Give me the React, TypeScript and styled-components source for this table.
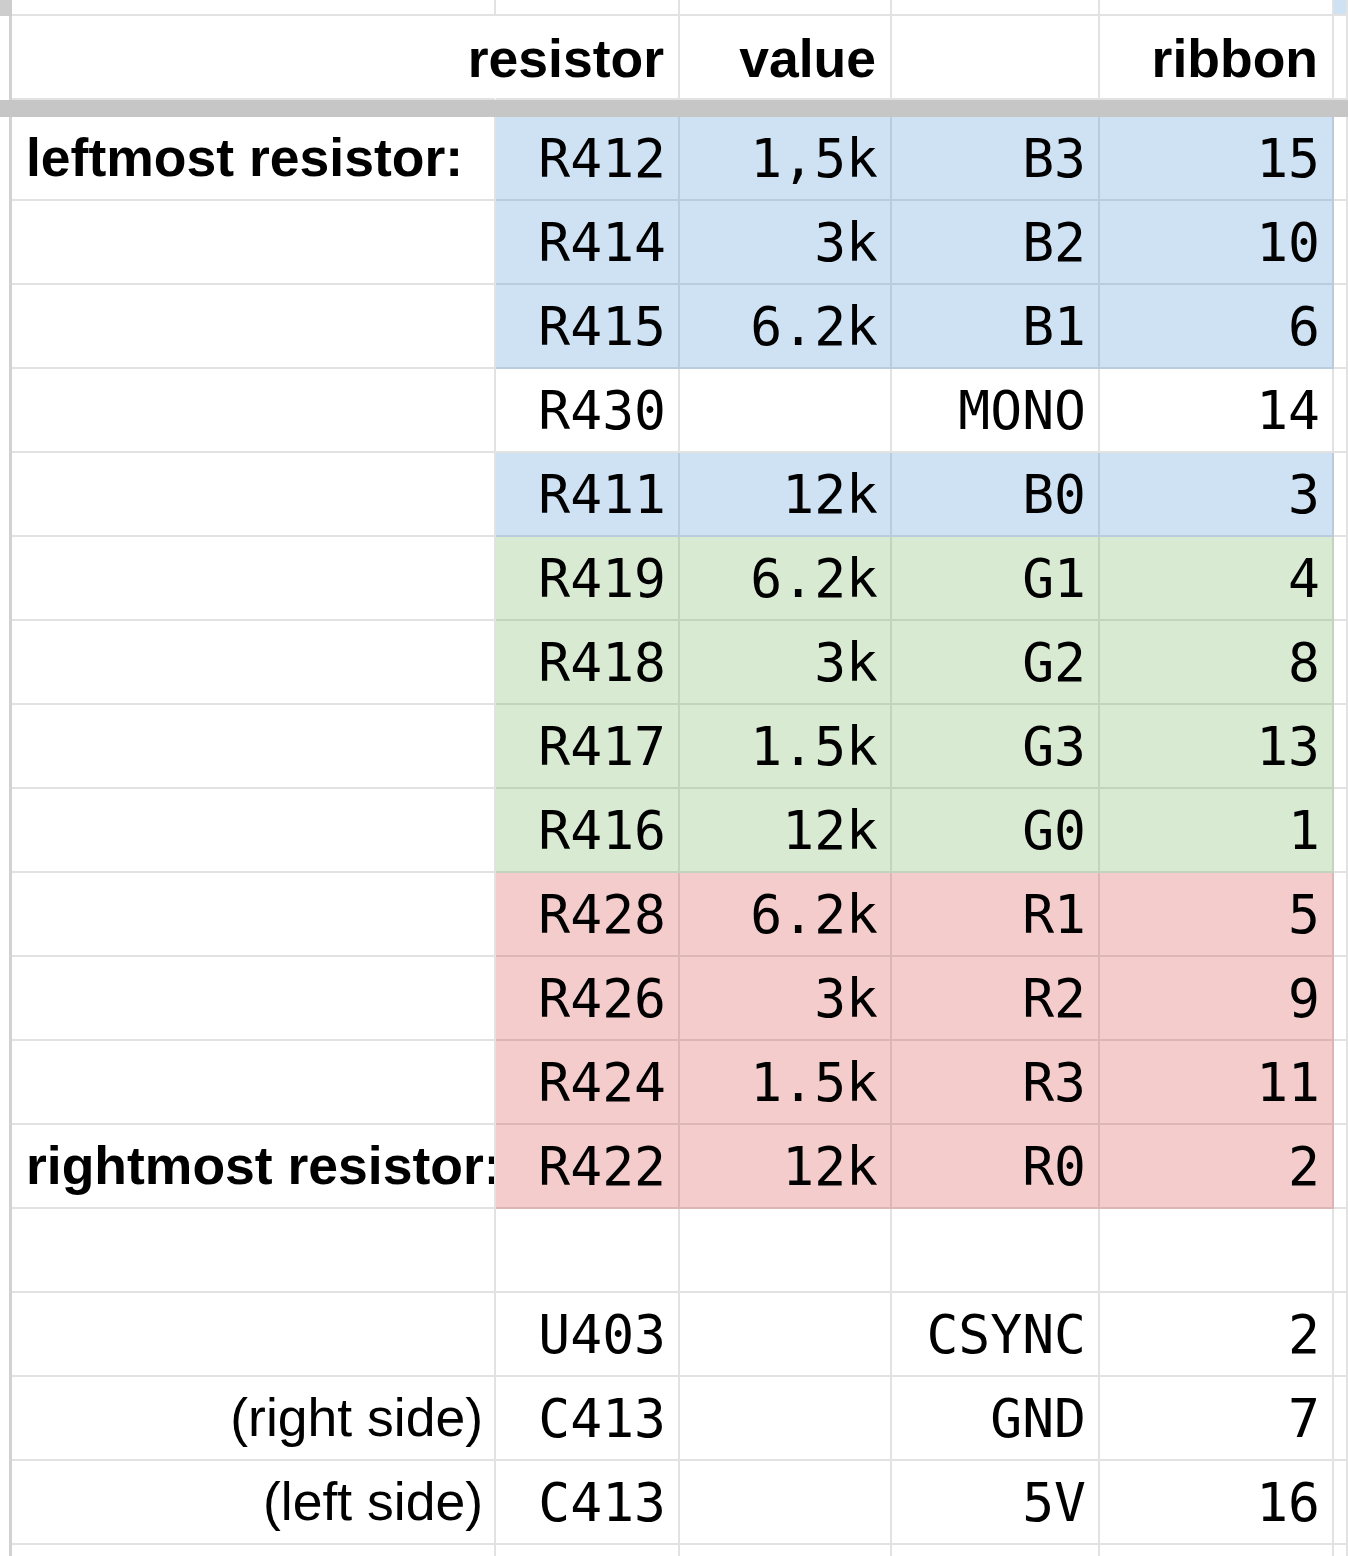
import React from "react";
import styled, { createGlobalStyle, css } from "styled-components";

type Fill = "none" | "blue" | "green" | "red";

const fills: Record<Fill, { bg: string; line: string }> = {
  none: { bg: "#ffffff", line: "#e2e2e2" },
  blue: { bg: "#cfe2f3", line: "#b9cbdd" },
  green: { bg: "#d9ead3", line: "#c2d4bd" },
  red: { bg: "#f4cccc", line: "#dcb5b5" },
};

const GlobalStyle = createGlobalStyle`
  html, body {
    margin: 0;
    padding: 0;
    background: #ffffff;
    overflow: hidden;
  }
  body {
    font-family: "Liberation Sans", Arial, sans-serif;
    color: #000;
  }
`;

const Sheet = styled.div`
  display: grid;
  grid-template-columns: 12px 484px 184px 212px 208px 234px 1fr;
  grid-template-rows: 16px 84px 17px repeat(17, 84px) 11px;
  width: 1348px;
  height: 1556px;
  overflow: hidden;
`;

const Gutter = styled.div<{ $top?: boolean }>`
  box-sizing: border-box;
  background: ${(p) => (p.$top ? "#cdcdcd" : "#ffffff")};
  border-right: 3px solid ${(p) => (p.$top ? "#cdcdcd" : "#d2d2d2")};
`;

const FrozenBar = styled.div`
  grid-column: 1 / -1;
  background: #c6c6c6;
`;

const Cell = styled.div<{
  $fill?: Fill;
  $align?: "left" | "right";
  $mono?: boolean;
  $bold?: boolean;
  $noRight?: boolean;
  $spill?: boolean;
  $head?: boolean;
}>`
  box-sizing: border-box;
  display: flex;
  align-items: center;
  justify-content: ${(p) => (p.$align === "left" ? "flex-start" : "flex-end")};
  padding: ${(p) =>
    p.$align === "left"
      ? "0 0 0 14px"
      : p.$mono
      ? "0 12px 0 0"
      : p.$head
      ? "4px 14px 0 0"
      : "0 11px 0 0"};
  background: ${(p) => fills[p.$fill ?? "none"].bg};
  border-right: 2px solid
    ${(p) => (p.$noRight ? fills[p.$fill ?? "none"].bg : fills[p.$fill ?? "none"].line)};
  border-bottom: 2px solid ${(p) => fills[p.$fill ?? "none"].line};
  white-space: nowrap;
  overflow: ${(p) => (p.$spill ? "visible" : "hidden")};
  line-height: 1;
  ${(p) =>
    p.$mono
      ? css`
          font-family: "DejaVu Sans Mono", "Liberation Mono", monospace;
          font-size: 53px;
          font-weight: 400;
        `
      : css`
          font-family: "Liberation Sans", Arial, sans-serif;
          font-size: 53.5px;
          font-weight: ${p.$bold ? 700 : 400};
        `}
`;

const TopCell = styled.div<{ $fill?: Fill }>`
  box-sizing: border-box;
  background: ${(p) => fills[p.$fill ?? "none"].bg};
  border-right: 2px solid #e2e2e2;
  border-bottom: 2px solid #e2e2e2;
`;

const TailCell = styled.div`
  box-sizing: border-box;
  background: #ffffff;
  border-right: 2px solid #e2e2e2;
`;

type Row = {
  label?: string;
  bold?: boolean;
  labelAlign?: "left" | "right";
  id: string;
  value: string;
  net: string;
  pin: string;
  fill: Fill;
};

const rows: Row[] = [
  { label: "leftmost resistor:", bold: true, labelAlign: "left", id: "R412", value: "1,5k", net: "B3", pin: "15", fill: "blue" },
  { id: "R414", value: "3k", net: "B2", pin: "10", fill: "blue" },
  { id: "R415", value: "6.2k", net: "B1", pin: "6", fill: "blue" },
  { id: "R430", value: "", net: "MONO", pin: "14", fill: "none" },
  { id: "R411", value: "12k", net: "B0", pin: "3", fill: "blue" },
  { id: "R419", value: "6.2k", net: "G1", pin: "4", fill: "green" },
  { id: "R418", value: "3k", net: "G2", pin: "8", fill: "green" },
  { id: "R417", value: "1.5k", net: "G3", pin: "13", fill: "green" },
  { id: "R416", value: "12k", net: "G0", pin: "1", fill: "green" },
  { id: "R428", value: "6.2k", net: "R1", pin: "5", fill: "red" },
  { id: "R426", value: "3k", net: "R2", pin: "9", fill: "red" },
  { id: "R424", value: "1.5k", net: "R3", pin: "11", fill: "red" },
  { label: "rightmost resistor:", bold: true, labelAlign: "left", id: "R422", value: "12k", net: "R0", pin: "2", fill: "red" },
  { id: "", value: "", net: "", pin: "", fill: "none" },
  { id: "U403", value: "", net: "CSYNC", pin: "2", fill: "none" },
  { label: "(right side)", labelAlign: "right", id: "C413", value: "", net: "GND", pin: "7", fill: "none" },
  { label: "(left side)", labelAlign: "right", id: "C413", value: "", net: "5V", pin: "16", fill: "none" },
];

export default function App() {
  return (
    <>
      <GlobalStyle />
      <Sheet>
        {/* partial row above the header */}
        <Gutter $top />
        <TopCell />
        <TopCell />
        <TopCell />
        <TopCell />
        <TopCell />
        <TopCell $fill="blue" />

        {/* header row */}
        <Gutter />
        <Cell $noRight />
        <Cell $bold $spill $head>resistor</Cell>
        <Cell $bold $head>value</Cell>
        <Cell />
        <Cell $bold $head>ribbon</Cell>
        <Cell />

        <FrozenBar />

        {rows.map((r, i) => (
          <React.Fragment key={i}>
            <Gutter />
            <Cell $align={r.labelAlign ?? "right"} $bold={r.bold}>
              {r.label}
            </Cell>
            <Cell $mono $fill={r.fill}>{r.id}</Cell>
            <Cell $mono $fill={r.fill}>{r.value}</Cell>
            <Cell $mono $fill={r.fill}>{r.net}</Cell>
            <Cell $mono $fill={r.fill}>{r.pin}</Cell>
            <Cell />
          </React.Fragment>
        ))}

        {/* partial row at the bottom */}
        <Gutter />
        <TailCell />
        <TailCell />
        <TailCell />
        <TailCell />
        <TailCell />
        <TailCell />
      </Sheet>
    </>
  );
}
